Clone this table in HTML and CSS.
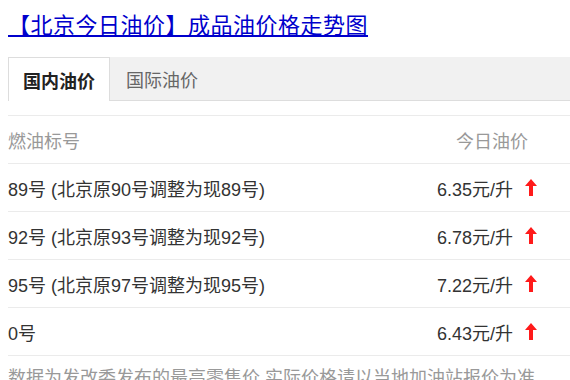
FILE: index.html
```html
<!DOCTYPE html>
<html lang="zh-CN">
<head>
<meta charset="utf-8">
<title>北京今日油价</title>
<link rel="stylesheet" href="styles.css">
</head>
<body>
<h1 class="title"><a class="title-link" href="#">【北京今日油价】成品油价格走势图</a></h1>
<div class="tabs">
  <div class="tab tab-active">国内油价</div>
  <div class="tab">国际油价</div>
</div>
<div class="table">
  <div class="row row-head">
    <span class="name">燃油标号</span>
    <span class="price-head">今日油价</span>
  </div>
  <div class="row">
    <span class="name">89号 (北京原90号调整为现89号)</span>
    <span class="price">6.35元/升<svg class="up" viewBox="0 0 12 17" width="12" height="17"><path d="M6 0 L12 7 H8 V17 H4 V7 H0 Z"/></svg></span>
  </div>
  <div class="row">
    <span class="name">92号 (北京原93号调整为现92号)</span>
    <span class="price">6.78元/升<svg class="up" viewBox="0 0 12 17" width="12" height="17"><path d="M6 0 L12 7 H8 V17 H4 V7 H0 Z"/></svg></span>
  </div>
  <div class="row">
    <span class="name">95号 (北京原97号调整为现95号)</span>
    <span class="price">7.22元/升<svg class="up" viewBox="0 0 12 17" width="12" height="17"><path d="M6 0 L12 7 H8 V17 H4 V7 H0 Z"/></svg></span>
  </div>
  <div class="row">
    <span class="name">0号</span>
    <span class="price">6.43元/升<svg class="up" viewBox="0 0 12 17" width="12" height="17"><path d="M6 0 L12 7 H8 V17 H4 V7 H0 Z"/></svg></span>
  </div>
</div>
<p class="note">数据为发改委发布的最高零售价,实际价格请以当地加油站报价为准</p>
</body>
</html>
```

FILE: styles.css
```css
html, body {
  margin: 0;
  padding: 0;
  overflow: hidden;
  background: #fff;
}
body {
  padding: 12px 0 0 8px;
  font-family: "Liberation Sans", "Noto Sans CJK SC", sans-serif;
  color: #333;
}
.title {
  margin: 0;
  font-size: 22px;
  font-weight: normal;
  line-height: 28px;
  letter-spacing: 0.5px;
  white-space: nowrap;
}
.title-link {
  color: #0000cc;
  text-decoration: underline;
}
.tabs {
  margin-top: 17px;
  display: flex;
  height: 43px;
  background: #f1f1f1;
  border-bottom: 1px solid #dddddd;
}
.tab {
  display: flex;
  align-items: center;
  padding: 0 16px;
  font-size: 18px;
  color: #666;
  white-space: nowrap;
}
.tab-active {
  padding: 0 14px;
  background: #fff;
  border: 1px solid #dddddd;
  border-bottom: none;
  margin-bottom: -1px;
  height: 44px;
  box-sizing: border-box;
  font-weight: bold;
  color: #222;
}
.table {
  margin-top: 14px;
  border-top: 1px solid #ebebeb;
}
.row {
  display: flex;
  align-items: center;
  justify-content: space-between;
  height: 47px;
  border-bottom: 1px solid #ebebeb;
  font-size: 18px;
  color: #333;
  white-space: nowrap;
}
.row-head {
  color: #999;
}
.price-head {
  padding-right: 42px;
}
.price {
  display: flex;
  align-items: center;
  padding-right: 33px;
}
.up {
  margin-left: 12px;
  fill: #ff1a1a;
}
.note {
  margin: 8px 0 0;
  font-size: 18px;
  line-height: 28px;
  color: #999;
  white-space: nowrap;
}
```
